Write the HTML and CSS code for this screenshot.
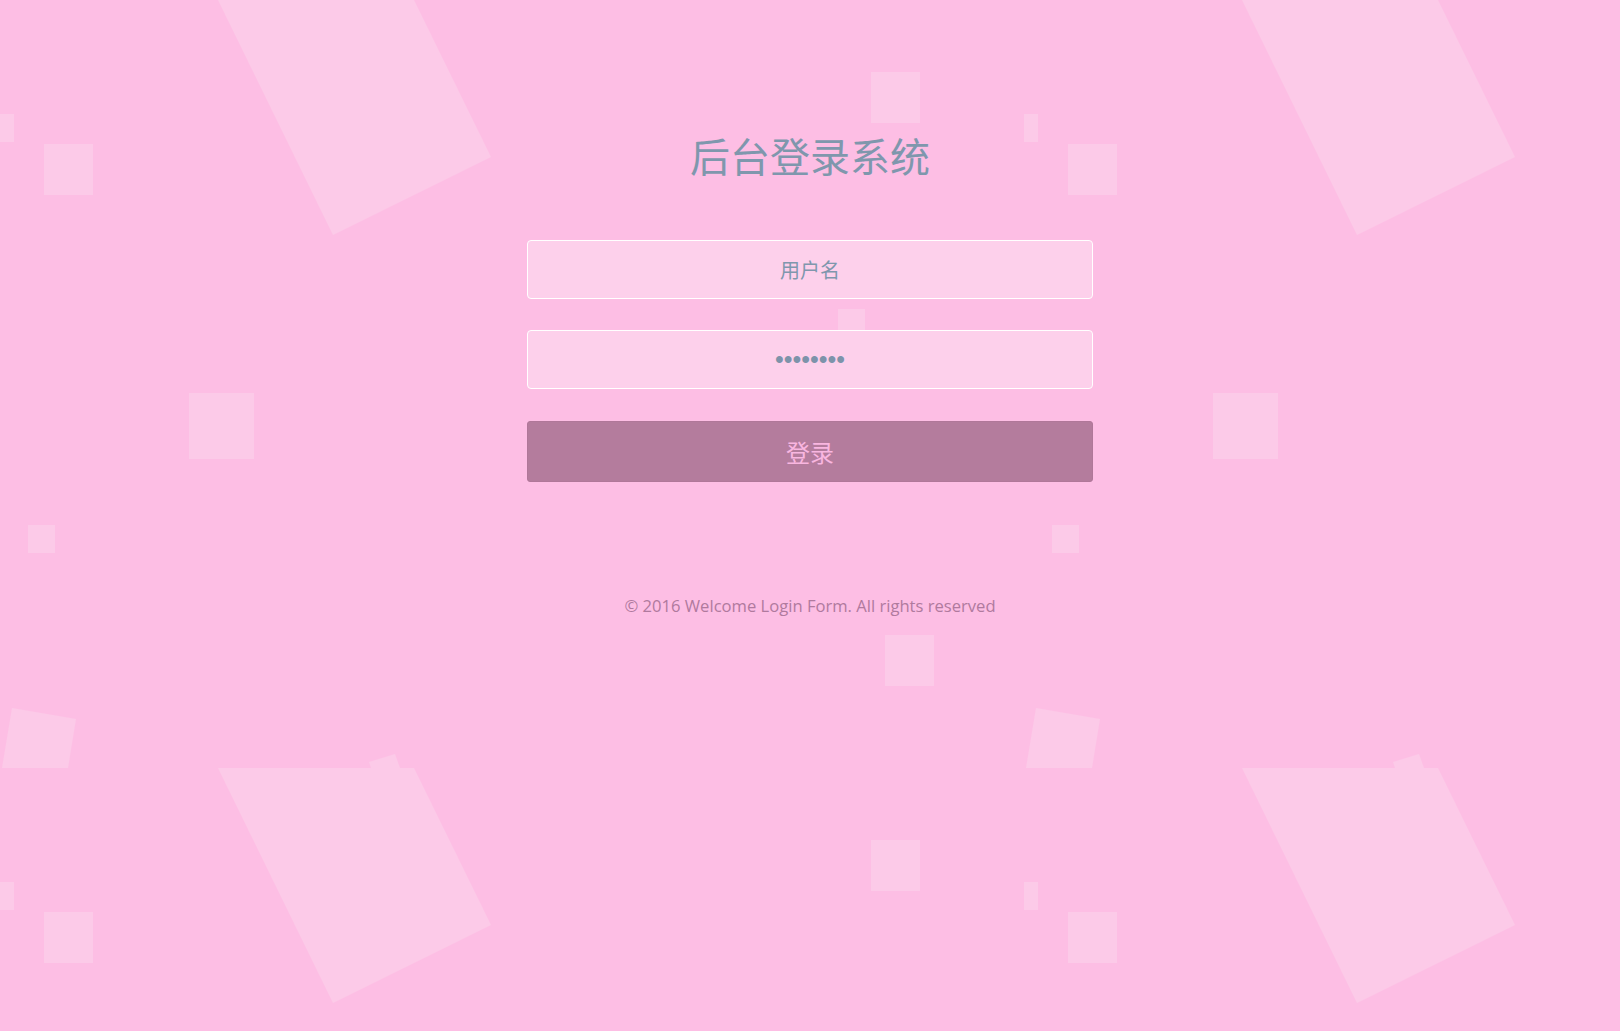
FILE: index.html
```html
<!DOCTYPE html>
<html lang="zh-CN">
<head>
<meta charset="utf-8">
<title>后台登录系统</title>
<link rel="stylesheet" href="styles.css">
</head>
<body class="bg">
  <main class="page">
    <h1 class="title">后台登录系统</h1>
    <form class="login">
      <input class="field" type="text" placeholder="用户名">
      <input class="field field-pass" type="password" value="12345678">
      <button class="btn" type="button">登录</button>
    </form>
    <p class="copy">© 2016 Welcome Login Form. All rights reserved</p>
  </main>
</body>
</html>
```

FILE: styles.css
```css
html, body {
  margin: 0;
  padding: 0;
  height: 100%;
}

.bg {
  background-color: #fdbee4;
  background-image: url("data:image/svg+xml,%3Csvg xmlns='http://www.w3.org/2000/svg' width='1024' height='768'%3E%3Cg fill='%23fccae8'%3E%3Cpolygon points='218,0 414,0 491,157 333,235'/%3E%3Cpolygon points='369,762 395,754 400,768 371,768'/%3E%3Cpolygon points='12,708 76,719 68,768 2,768'/%3E%3Crect x='0' y='114' width='14' height='28'/%3E%3Crect x='44' y='144' width='49' height='51'/%3E%3Crect x='189' y='393' width='65' height='66'/%3E%3Crect x='28' y='525' width='27' height='28'/%3E%3Crect x='871' y='72' width='49' height='51'/%3E%3Crect x='838' y='309' width='27' height='27'/%3E%3Crect x='885' y='635' width='49' height='51'/%3E%3C/g%3E%3C/svg%3E");
  background-repeat: repeat;
  background-size: 1024px 768px;
  font-family: "Open Sans", "Noto Sans CJK SC", sans-serif;
}

.page {
  width: 566px;
  margin: 0 auto;
  padding-top: 135px;
  display: flex;
  flex-direction: column;
  align-items: stretch;
}

.title {
  margin: 0;
  font-family: "Noto Sans CJK SC", sans-serif;
  font-weight: normal;
  font-size: 40px;
  line-height: 40px;
  text-align: center;
  color: #7f97ad;
}

.login {
  margin-top: 65px;
  display: flex;
  flex-direction: column;
}

.field {
  box-sizing: border-box;
  height: 59px;
  width: 100%;
  margin: 0 0 31px 0;
  padding: 0 10px;
  border: 1px solid #ffffff;
  border-radius: 4px;
  background: #fdd0eb;
  color: #7f97ad;
  font-family: "Noto Sans CJK SC", sans-serif;
  font-size: 20px;
  text-align: center;
  outline: none;
}

.field::placeholder {
  color: #7f97ad;
  opacity: 1;
}

.field-pass {
  font-family: "Liberation Sans", sans-serif;
  font-size: 25px;
  margin-bottom: 32px;
  color: #7d93aa;
}

.btn {
  box-sizing: border-box;
  height: 61px;
  width: 100%;
  border: 1px solid #b07799;
  border-radius: 3px;
  background: #b47c9d;
  color: #f9b6e0;
  font-family: "Noto Sans CJK SC", sans-serif;
  font-size: 24px;
  cursor: pointer;
}

.copy {
  margin: 112px 0 0 0;
  text-align: center;
  font-size: 16.6px;
  line-height: 24px;
  color: #b07a9e;
}
```
